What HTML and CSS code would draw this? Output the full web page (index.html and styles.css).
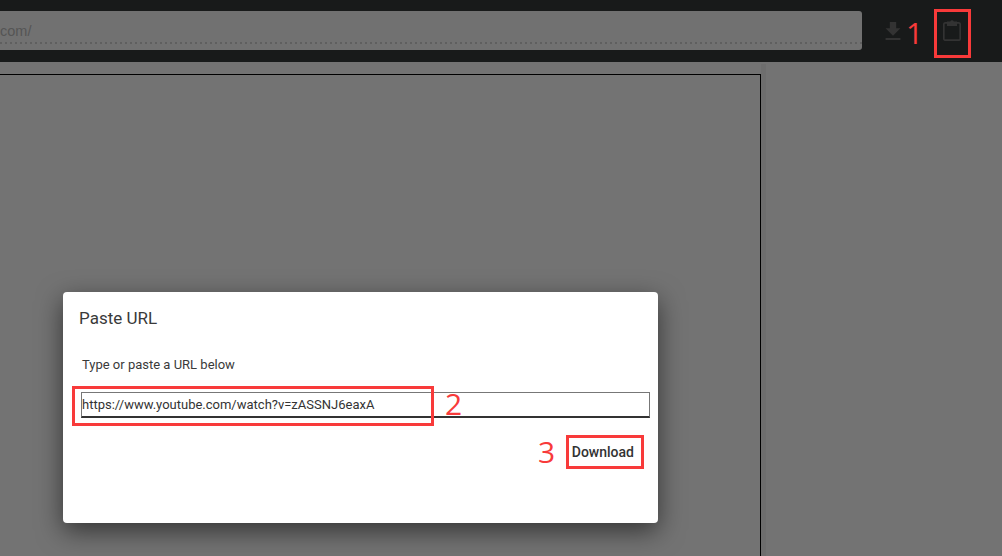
FILE: index.html
```html
<!DOCTYPE html>
<html>
<head>
    <title>Paste URL</title>
    <link rel="stylesheet" href="styles.css">
</head>
<body>
    <div class="toolbar">
        <div class="url-bar"><span class="url-text">com/</span></div>
        <svg class="download-icon" viewBox="5 3 14 17" width="18" height="18"><path d="M19 9h-4V3H9v6H5l7 7 7-7zM5 18v2h14v-2H5z"/></svg>
        <svg class="clip-icon" viewBox="0 0 18 22" width="18" height="22">
            <rect x="0.8" y="3.8" width="16.4" height="17.4" rx="1.5"/>
            <path class="clip-fill" d="M4 2.5h3.2a2 2 0 0 1 3.6 0H14V7H4z"/>
        </svg>
    </div>
    <div class="page">
        <div class="sheet"></div>
        <div class="scroll-strip"></div>
    </div>

    <!-- Dialog -->
    <div class="dialog">
        <h2 class="dialog-title">Paste URL</h2>
        <p class="dialog-label">Type or paste a URL below</p>
        <div class="url-input">https://www.youtube.com/watch?v=zASSNJ6eaxA</div>
        <div class="dialog-actions"><button class="download-btn">Download</button></div>
    </div>

    <!-- Annotations -->
    <div class="mark mark-box1"></div>
    <div class="mark mark-box2"></div>
    <div class="mark mark-box3"></div>
    <span class="num num1">1</span>
    <span class="num num2">2</span>
    <span class="num num3">3</span>
</body>
</html>
```

FILE: styles.css
```css
html, body { margin: 0; height: 100%; overflow: hidden; }
body { background-color: #737373; font-family: Roboto, Arial, sans-serif; position: relative; }

.toolbar {
    display: flex;
    align-items: flex-start;
    height: 62px;
    background-color: #181a1a;
}
.url-bar {
    width: 862px;
    height: 39px;
    margin-top: 11px;
    box-sizing: border-box;
    padding: 10px 0 0 0;
    flex: none;
    background-color: #717171;
    border-bottom-right-radius: 3px;
    border-top-right-radius: 3px;
    background-image: linear-gradient(90deg, #5f5f5f 2px, transparent 2px);
    background-size: 5px 2px;
    background-repeat: repeat-x;
    background-position: 0 31px;
}
.url-text {
    display: block;
    font-family: "Liberation Sans", Arial, sans-serif;
    font-size: 14.5px;
    line-height: 20px;
    color: #555;
}
.download-icon { fill: #333; margin: 22px 0 0 22px; flex: none; }
.clip-icon { margin: 19px 0 0 41px; flex: none; fill: none; stroke: #333; stroke-width: 1.7; }
.clip-fill { fill: #333; stroke: none; }

.page { display: flex; height: 494px; }
.sheet {
    width: 761px;
    margin-top: 12px;
    box-sizing: border-box;
    border-top: 1px solid #000;
    border-right: 1px solid #000;
}
.scroll-strip { width: 5px; margin-top: 2px; background-color: #6e6e6e; }

.dialog {
    position: absolute;
    left: 63px;
    top: 292px;
    width: 595px;
    height: 231px;
    box-sizing: border-box;
    padding: 16px 8px 0 16px;
    background-color: #fff;
    border-radius: 4px;
    box-shadow: 0 8px 26px rgba(0, 0, 0, 0.55);
    color: #3a3a3a;
}
.dialog-title { margin: 0; font-size: 17px; font-weight: 400; line-height: 20px; }
.dialog-label { margin: 29px 0 0 3px; font-size: 13px; line-height: 16px; }
.url-input {
    margin: 19px 0 0 2px;
    height: 26px;
    box-sizing: border-box;
    border: 1px solid #777;
    border-bottom: 2px solid #333;
    font-size: 13px;
    line-height: 24px;
    color: #333;
}
.dialog-actions { display: flex; justify-content: flex-end; margin-top: 21px; padding-right: 16px; }
.download-btn {
    padding: 0;
    border: none;
    background: none;
    font-family: Roboto, Arial, sans-serif;
    font-size: 14px;
    font-weight: 500;
    line-height: 26px;
    color: #333;
}

.mark { position: absolute; box-sizing: border-box; border: 3px solid #f83a3a; }
.mark-box1 { left: 934px; top: 9px; width: 37px; height: 49px; }
.mark-box2 { left: 72px; top: 386px; width: 362px; height: 40px; }
.mark-box3 { left: 566px; top: 435px; width: 78px; height: 34px; }
.num { position: absolute; font-family: "Open Sans", Arial, sans-serif; font-size: 30px; line-height: 34px; color: #f83a3a; }
.num1 { left: 906px; top: 16px; }
.num2 { left: 445px; top: 387px; }
.num3 { left: 538px; top: 435px; }
```
